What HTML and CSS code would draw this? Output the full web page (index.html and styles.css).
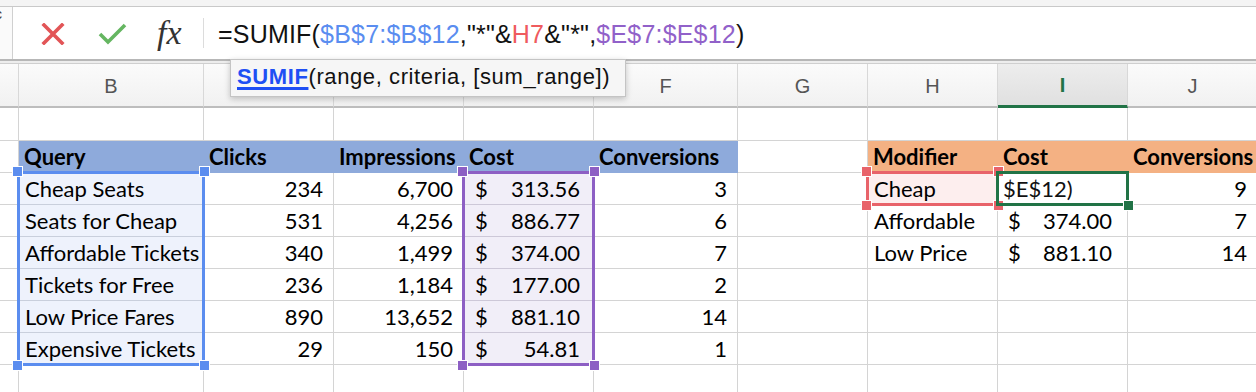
FILE: index.html
```html
<!DOCTYPE html>
<html lang="en">
<head>
  <meta charset="UTF-8" />
  <title>SUMIF with wildcards</title>
  <link rel="stylesheet" href="styles.css">
</head>
<body>

  <div class="top-strip"></div>

  <!-- Formula bar -->
  <div class="formula-bar">
    <div class="name-box"><span>c</span></div>
    <div class="fbar-buttons">
      <svg class="btn-cancel" width="24" height="22" viewBox="0 0 24 22">
        <path d="M3 2 L21 20 M21 2 L3 20" stroke="#e25557" stroke-width="3.6" stroke-linecap="square" fill="none"/>
      </svg>
      <svg class="btn-enter" width="30" height="22" viewBox="0 0 30 22">
        <path d="M2 11 L10 19 L27 2" stroke="#65b661" stroke-width="3.6" fill="none"/>
      </svg>
      <span class="fx">fx</span>
    </div>
    <div class="formula">=SUMIF(<span class="ref-blue">$B$7:$B$12</span>,"*"&amp;<span class="ref-red">H7</span>&amp;"*",<span class="ref-purple">$E$7:$E$12</span>)</div>
  </div>
  <div class="bar-gap"></div>

  <div class="tooltip"><a class="fn-link">SUMIF</a>(range, criteria, [sum_range])</div>

  <!-- Sheet -->
  <div class="sheet-wrap">
    <div class="sheet">
      <!-- column headers -->
      <div class="colhead"></div>
      <div class="colhead">B</div>
      <div class="colhead">C</div>
      <div class="colhead">D</div>
      <div class="colhead">E</div>
      <div class="colhead">F</div>
      <div class="colhead">G</div>
      <div class="colhead">H</div>
      <div class="colhead active">I</div>
      <div class="colhead">J</div>

      <!-- row 5 -->
      <div class="cell"></div><div class="cell"></div><div class="cell"></div><div class="cell"></div><div class="cell"></div>
      <div class="cell"></div><div class="cell"></div><div class="cell"></div><div class="cell"></div><div class="cell"></div>

      <!-- row 6: headers -->
      <div class="cell"></div>
      <div class="cell th blue">Query</div>
      <div class="cell th blue">Clicks</div>
      <div class="cell th blue">Impressions</div>
      <div class="cell th blue">Cost</div>
      <div class="cell th blue">Conversions</div>
      <div class="cell"></div>
      <div class="cell th orange">Modifier</div>
      <div class="cell th orange">Cost</div>
      <div class="cell th orange">Conversions</div>

      <!-- row 7 -->
      <div class="cell"></div>
      <div class="cell sel-b">Cheap Seats</div>
      <div class="cell num">234</div>
      <div class="cell num">6,700</div>
      <div class="cell money sel-e"><span>$</span><span>313.56</span></div>
      <div class="cell num">3</div>
      <div class="cell"></div>
      <div class="cell sel-h">Cheap</div>
      <div class="cell editing">$E$12)</div>
      <div class="cell num">9</div>

      <!-- row 8 -->
      <div class="cell"></div>
      <div class="cell sel-b">Seats for Cheap</div>
      <div class="cell num">531</div>
      <div class="cell num">4,256</div>
      <div class="cell money sel-e"><span>$</span><span>886.77</span></div>
      <div class="cell num">6</div>
      <div class="cell"></div>
      <div class="cell">Affordable</div>
      <div class="cell money right"><span>$</span><span>374.00</span></div>
      <div class="cell num">7</div>

      <!-- row 9 -->
      <div class="cell"></div>
      <div class="cell sel-b">Affordable Tickets</div>
      <div class="cell num">340</div>
      <div class="cell num">1,499</div>
      <div class="cell money sel-e"><span>$</span><span>374.00</span></div>
      <div class="cell num">7</div>
      <div class="cell"></div>
      <div class="cell">Low Price</div>
      <div class="cell money right"><span>$</span><span>881.10</span></div>
      <div class="cell num">14</div>

      <!-- row 10 -->
      <div class="cell"></div>
      <div class="cell sel-b">Tickets for Free</div>
      <div class="cell num">236</div>
      <div class="cell num">1,184</div>
      <div class="cell money sel-e"><span>$</span><span>177.00</span></div>
      <div class="cell num">2</div>
      <div class="cell"></div><div class="cell"></div><div class="cell"></div><div class="cell"></div>

      <!-- row 11 -->
      <div class="cell"></div>
      <div class="cell sel-b">Low Price Fares</div>
      <div class="cell num">890</div>
      <div class="cell num">13,652</div>
      <div class="cell money sel-e"><span>$</span><span>881.10</span></div>
      <div class="cell num">14</div>
      <div class="cell"></div><div class="cell"></div><div class="cell"></div><div class="cell"></div>

      <!-- row 12 -->
      <div class="cell"></div>
      <div class="cell sel-b">Expensive Tickets</div>
      <div class="cell num">29</div>
      <div class="cell num">150</div>
      <div class="cell money sel-e"><span>$</span><span>54.81</span></div>
      <div class="cell num">1</div>
      <div class="cell"></div><div class="cell"></div><div class="cell"></div><div class="cell"></div>

      <!-- row 13 -->
      <div class="cell"></div><div class="cell"></div><div class="cell"></div><div class="cell"></div><div class="cell"></div>
      <div class="cell"></div><div class="cell"></div><div class="cell"></div><div class="cell"></div><div class="cell"></div>
    </div>

    <!-- range highlights, same grid laid over the cells -->
    <div class="sheet ranges">
      <div class="range range-blue">
        <i class="h tl"></i><i class="h tr"></i><i class="h bl"></i><i class="h br"></i>
      </div>
      <div class="range range-purple">
        <i class="h tl"></i><i class="h tr"></i><i class="h bl"></i><i class="h br"></i>
      </div>
      <div class="range range-red">
        <i class="h tl"></i><i class="h tr"></i><i class="h bl"></i><i class="h br"></i>
      </div>
      <div class="range range-green">
        <i class="h br"></i>
      </div>
    </div>
  </div>

</body>
</html>
```

FILE: styles.css
```css
:root {
  --grid: #d4d4d4;
  --blue: #5b8def;
  --purple: #8d5fc4;
  --red: #e8636a;
  --green: #217346;
}

body {
  margin: 0;
  font-family: "Liberation Sans", Arial, sans-serif;
  background: #fff;
  overflow: hidden;
}

.top-strip {
  height: 6px;
  background: #f4f4f4;
}

.formula-bar {
  display: flex;
  align-items: center;
  height: 55px;
  box-sizing: border-box;
  border-top: 1px solid #c9c9c9;
  border-bottom: 2px solid #b7b7b7;
  background: #fff;
}

.name-box {
  width: 12px;
  height: 100%;
  border-right: 1px solid #d0d0d0;
  overflow: hidden;
  font-size: 14px;
  color: #333;
  background: #fafafa;
}

.name-box span {
  display: block;
  margin: 0 0 0 -5px;
  line-height: 14px;
}

.fbar-buttons {
  display: flex;
  align-items: center;
  width: 190px;
  height: 30px;
  border-right: 1px solid #dcdcdc;
}

.btn-cancel {
  margin-left: 28px;
  margin-top: 2px;
}

.btn-enter {
  margin-left: 33px;
  margin-top: 2px;
}

.fx {
  margin-left: 29px;
  font-family: "Liberation Serif", "Times New Roman", serif;
  font-style: italic;
  font-size: 34px;
  color: #333;
  line-height: 30px;
}

.formula {
  margin-left: 14px;
  font-size: 25px;
  letter-spacing: 0.2px;
  color: #111;
  padding-top: 3px;
  white-space: nowrap;
}

.ref-blue { color: #5a8df0; }
.ref-red { color: #ef5b5e; }
.ref-purple { color: #9161c9; }

.bar-gap {
  height: 2px;
  background: #ededed;
  border-bottom: 1px solid #cfcfcf;
}

.tooltip {
  position: absolute;
  left: 230px;
  top: 59px;
  width: 396px;
  height: 38px;
  box-sizing: border-box;
  padding: 4px 0 0 6px;
  background: #f6f6f6;
  border: 1px solid #c4c4c4;
  box-shadow: 0 2px 6px rgba(0, 0, 0, 0.22);
  font-size: 22px;
  letter-spacing: 0.6px;
  color: #111;
  white-space: nowrap;
  z-index: 5;
}

.fn-link {
  color: #1e4ff4;
  font-weight: bold;
  text-decoration: underline;
  text-decoration-thickness: 3px;
  text-underline-offset: 3px;
}

/* sheet */

.sheet-wrap {
  position: relative;
}

.sheet {
  display: grid;
  grid-template-columns: 19px 185px 130px 130px 130px 144px 130px 130px 130px 130px;
  grid-template-rows: 44px 33px repeat(8, 32px);
  font-family: Lato, "Open Sans", sans-serif;
  font-size: 22px;
  color: #000;
}

.ranges {
  position: absolute;
  inset: 0;
  pointer-events: none;
}

.colhead {
  display: flex;
  align-items: center;
  justify-content: center;
  box-sizing: border-box;
  border-right: 1px solid #d8d8d8;
  border-bottom: 2px solid #bdbdbd;
  background: linear-gradient(#fbfbfb, #f1f1f1);
  font-family: "Liberation Sans", Arial, sans-serif;
  font-size: 20px;
  color: #555;
  padding-top: 2px;
}

.colhead.active {
  background: linear-gradient(#ededed, #e0e0e0);
  border-bottom: 3px solid var(--green);
  color: var(--green);
  font-weight: bold;
}

.cell {
  display: flex;
  align-items: flex-end;
  box-sizing: border-box;
  padding: 0 6px 2px;
  border-right: 1px solid var(--grid);
  border-bottom: 1px solid var(--grid);
  white-space: nowrap;
}

.th {
  font-weight: bold;
  padding-left: 5px;
}

.th.blue {
  background: #8eaadb;
  border-color: #8eaadb;
}

.th.orange {
  background: #f4b183;
  border-color: #f4b183;
}

.num {
  justify-content: flex-end;
  padding-right: 10px;
}

.money {
  justify-content: space-between;
  padding: 0 13px 2px 11px;
}

.money.right {
  padding: 0 15px 2px 10px;
}

.sel-b {
  background: #eef2fc;
  border-bottom-color: #c9cfdc;
}

.sel-e {
  background: #f1eef8;
  border-bottom-color: #cdc8d8;
}

.sel-h {
  background: #fdeeee;
}

.editing {
  padding-left: 5px;
  color: #111;
}

/* range outlines sitting on the gridlines */

.range {
  position: relative;
  margin: -2px -1px -1px -2px;
  border: 3px solid;
}

.range-blue {
  grid-column: 2 / 3;
  grid-row: 4 / 10;
  border-color: var(--blue);
}

.range-purple {
  grid-column: 5 / 6;
  grid-row: 4 / 10;
  border-color: var(--purple);
}

.range-red {
  grid-column: 8 / 9;
  grid-row: 4 / 5;
  border-color: var(--red);
}

.range-green {
  grid-column: 9 / 10;
  grid-row: 4 / 5;
  border-color: var(--green);
}

.h {
  position: absolute;
  width: 9px;
  height: 9px;
  border: 1px solid #fff;
  background: currentColor;
}

.range-blue .h { color: var(--blue); }
.range-purple .h { color: var(--purple); }
.range-red .h { color: var(--red); }
.range-green .h { color: var(--green); }

.h.tl { left: -8px; top: -8px; }
.h.tr { right: -8px; top: -8px; }
.h.bl { left: -8px; bottom: -8px; }
.h.br { right: -8px; bottom: -8px; }
```
